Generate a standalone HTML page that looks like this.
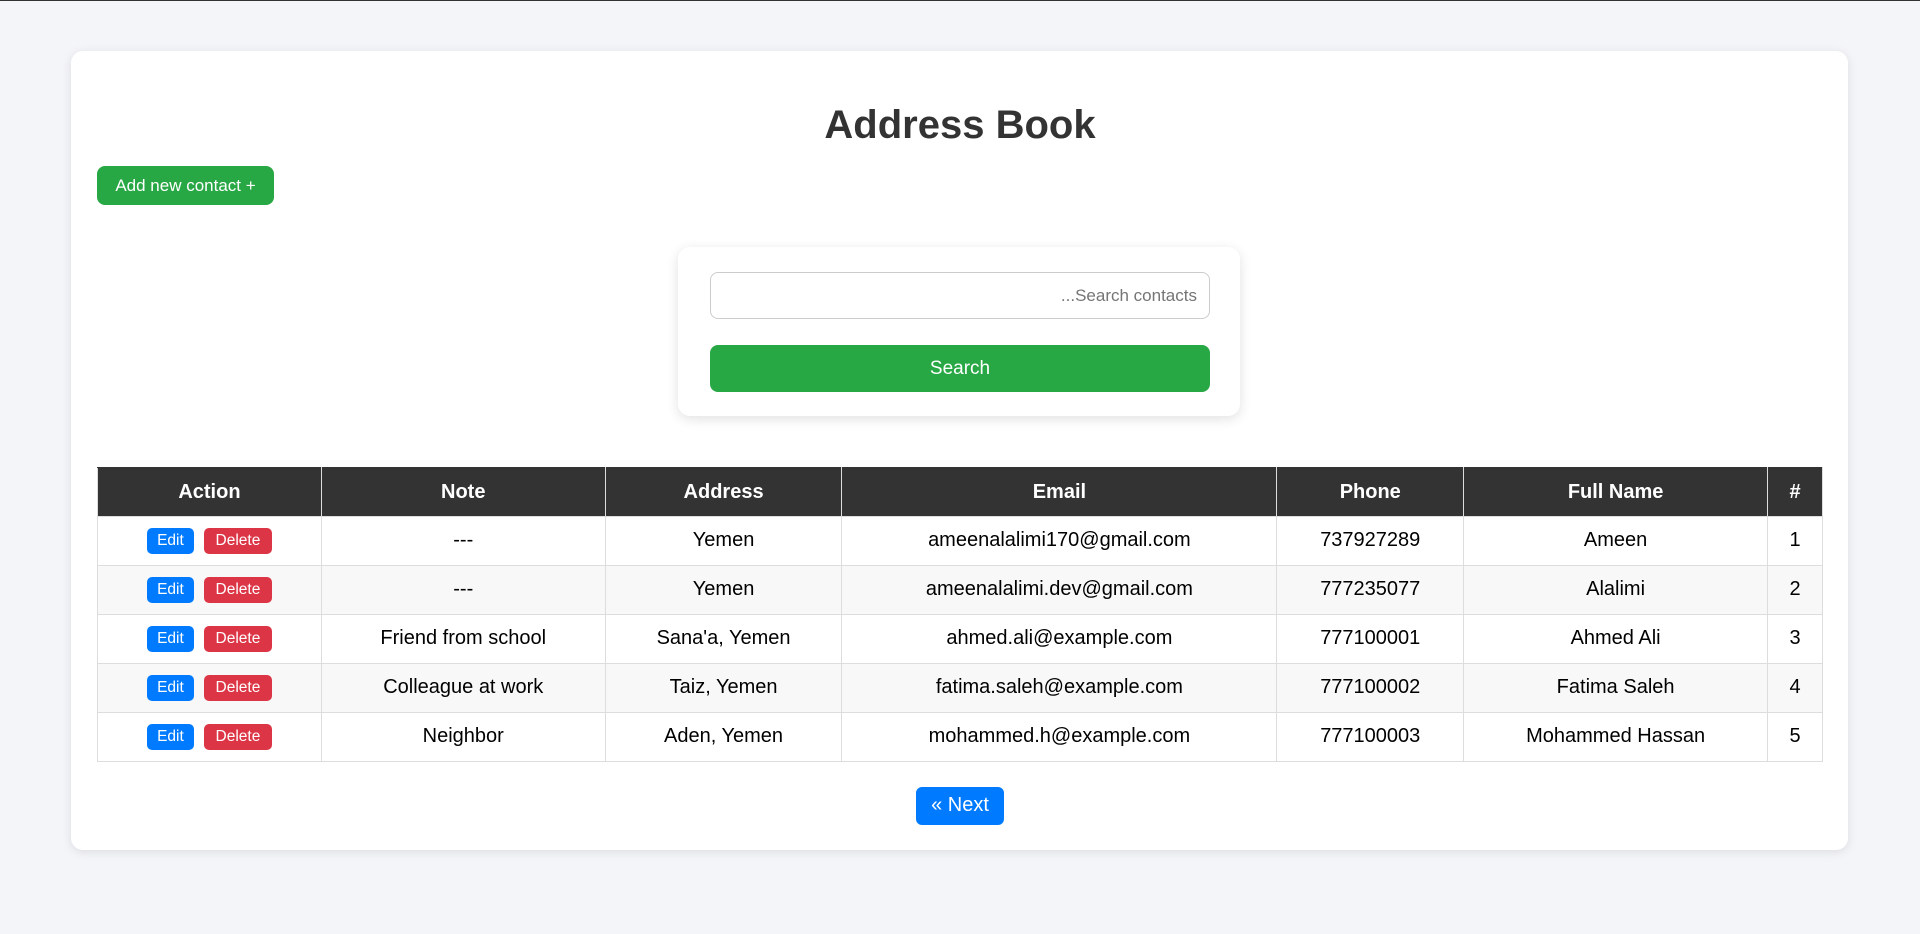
<!DOCTYPE html>
<html><head><meta charset="utf-8"><style>
*{box-sizing:border-box;margin:0;padding:0}
body{width:1920px;height:934px;background:#f4f5f9;font-family:"Liberation Sans",Arial,sans-serif;position:relative;overflow:hidden;border-top:1px solid #333}
.card{position:absolute;left:71px;top:50px;width:1777px;height:799px;background:#fff;border-radius:12px;box-shadow:0 2px 10px rgba(0,0,0,.1)}
h1{position:absolute;left:0;right:0;top:99px;text-align:center;font-size:40px;font-weight:bold;color:#333;line-height:50px}
.add{position:absolute;left:97px;top:165px;width:177px;height:39px;background:#28a745;color:#fff;border-radius:8px;font-size:17px;line-height:39px;text-align:center}
.sbox{position:absolute;left:678px;top:246px;width:562px;height:169px;background:#fff;border-radius:12px;box-shadow:0 3px 12px rgba(0,0,0,.12)}
.inp{position:absolute;left:32px;top:25px;width:500px;height:47px;border:1px solid #ccc;border-radius:8px;text-align:right;padding-right:12px;line-height:45px;font-size:17px;color:#757575}
.sbtn{position:absolute;left:32px;top:98px;width:500px;height:47px;background:#28a745;border-radius:8px;color:#fff;font-size:19px;line-height:47px;text-align:center}
table{position:absolute;left:97px;top:466px;width:1726px;border-collapse:collapse;font-size:20px;color:#000}
th{background:#333;color:#fff;height:49px;font-weight:bold;border:1px solid #ddd;border-top-color:#333}
td{height:49px;text-align:center;border:1px solid #ddd;padding-bottom:1px}
tr:nth-child(odd) td{background:#f8f8f8}
.b{display:inline-block;color:#fff;font-size:15.5px;height:26px;line-height:26px;border-radius:5px;vertical-align:middle}
.e{background:#007bff;width:47px}.d{background:#dc3545;width:68px;margin-left:10px}
.next{position:absolute;left:916px;top:786px;width:88px;height:38px;background:#007bff;color:#fff;border-radius:6px;font-size:20px;line-height:37px;text-align:center}
</style></head><body>
<div class="card"></div>
<h1>Address Book</h1>
<div class="add">Add new contact +</div>
<div class="sbox"><div class="inp">...Search contacts</div><div class="sbtn">Search</div></div>
<table>
<colgroup><col style="width:224px"><col style="width:284px"><col style="width:237px"><col style="width:435px"><col style="width:187px"><col style="width:304px"><col style="width:55px"></colgroup>
<tr><th>Action</th><th>Note</th><th>Address</th><th>Email</th><th>Phone</th><th>Full Name</th><th>#</th></tr>
<tr><td><span class="b e">Edit</span><span class="b d">Delete</span></td><td>---</td><td>Yemen</td><td>ameenalalimi170@gmail.com</td><td>737927289</td><td>Ameen</td><td>1</td></tr>
<tr><td><span class="b e">Edit</span><span class="b d">Delete</span></td><td>---</td><td>Yemen</td><td>ameenalalimi.dev@gmail.com</td><td>777235077</td><td>Alalimi</td><td>2</td></tr>
<tr><td><span class="b e">Edit</span><span class="b d">Delete</span></td><td>Friend from school</td><td>Sana'a, Yemen</td><td>ahmed.ali@example.com</td><td>777100001</td><td>Ahmed Ali</td><td>3</td></tr>
<tr><td><span class="b e">Edit</span><span class="b d">Delete</span></td><td>Colleague at work</td><td>Taiz, Yemen</td><td>fatima.saleh@example.com</td><td>777100002</td><td>Fatima Saleh</td><td>4</td></tr>
<tr><td><span class="b e">Edit</span><span class="b d">Delete</span></td><td>Neighbor</td><td>Aden, Yemen</td><td>mohammed.h@example.com</td><td>777100003</td><td>Mohammed Hassan</td><td>5</td></tr>
</table>
<div class="next">« Next</div>
</body></html>
